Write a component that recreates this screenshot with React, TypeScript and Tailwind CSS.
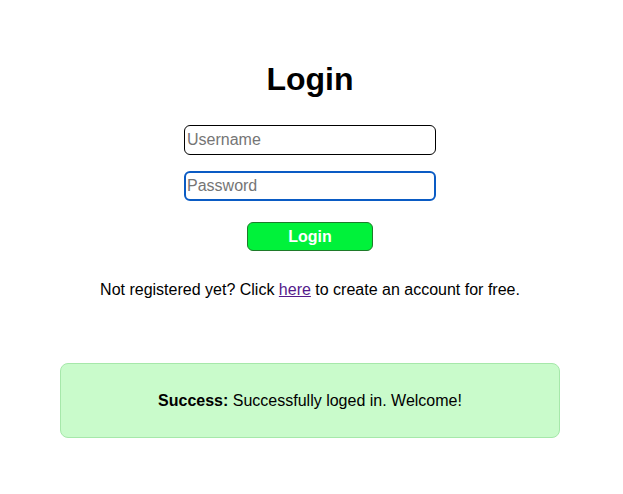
export default function App() {
  return (
    <div className="min-h-[494px] bg-white pr-[3px] font-['Liberation_Sans',Arial,sans-serif] text-black">
      <div className="flex flex-col items-center pt-[61px]">
        <h1 className="text-[32px] font-bold leading-[37px]">Login</h1>
        <form className="mt-[27px] flex flex-col items-center" onSubmit={(e) => e.preventDefault()}>
          <input
            type="text"
            placeholder="Username"
            className="h-[30px] w-[252px] rounded-[6px] border border-black px-[2px] text-[16px] placeholder:text-[#757575] outline-none"
          />
          <input
            type="password"
            placeholder="Password"
            className="mt-4 h-[30px] w-[252px] rounded-[6px] border-2 border-[#0a5bc4] px-[1px] text-[16px] placeholder:text-[#757575] outline-none"
          />
          <button
            type="submit"
            className="mt-[21px] h-[29px] w-[126px] rounded-[6px] border border-[#1f7a2a] bg-[#00f23a] text-[16px] font-bold text-white"
          >
            Login
          </button>
        </form>
        <p className="mt-[30px] text-[16px] leading-[18px]">
          Not registered yet? Click{" "}
          <a href="#" className="text-[#551a8b] underline">
            here
          </a>{" "}
          to create an account for free.
        </p>
      </div>
      <div className="mx-auto mt-[64px] flex h-[75px] w-[500px] items-center justify-center rounded-[8px] border border-[#a6e8aa] bg-[#c9fbcb] text-[16px]">
        <span>
          <b>Success:</b> Successfully loged in. Welcome!
        </span>
      </div>
    </div>
  );
}
